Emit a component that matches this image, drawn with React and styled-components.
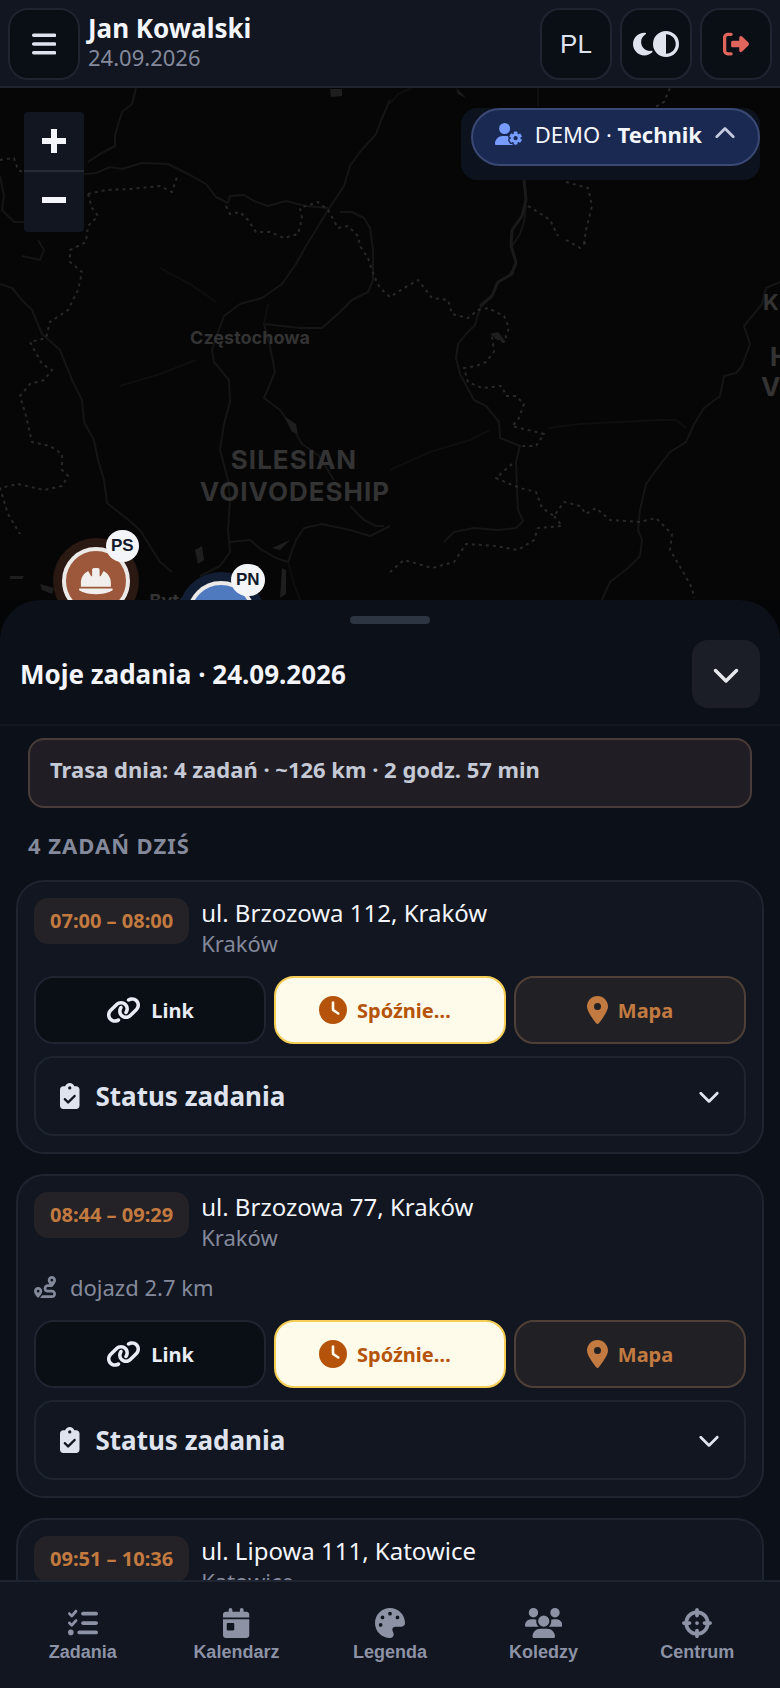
import React from "react";
import styled, { createGlobalStyle } from "styled-components";
import {
  FaBars,
  FaMoon,
  FaCircleHalfStroke,
  FaRightFromBracket,
  FaUserGear,
  FaChevronUp,
  FaChevronDown,
  FaLink,
  FaClock,
  FaLocationDot,
  FaClipboardCheck,
  FaRoute,
  FaListCheck,
  FaCalendarDay,
  FaPalette,
  FaUsers,
  FaCrosshairs,
  FaHelmetSafety,
} from "react-icons/fa6";

const color = {
  bg: "#0c1018",
  deep: "#0a0e15",
  surface: "#111621",
  line: "#1e2530",
  text: "#f3f5fb",
  soft: "#dfe3ee",
  muted: "#848a9b",
  copper: "#c27a40",
};

const GlobalStyle = createGlobalStyle`
  *, *::before, *::after { box-sizing: border-box; }
  body {
    margin: 0;
    background: #040506;
    color: ${color.text};
    font-family: "Noto Sans", sans-serif;
  }
  button { font-family: inherit; margin: 0; padding: 0; border: 0; color: inherit; cursor: pointer; }
  svg { display: block; flex: none; }
`;

// Icons whose artboard is not square keep the width of that artboard.
const fitted = (Icon, units) => styled(Icon)`
  width: calc(1em * ${units} / 512);
  height: 1em;
`;

const BarsIcon = fitted(FaBars, 448);
const MoonIcon = fitted(FaMoon, 384);
const UserGearIcon = fitted(FaUserGear, 640);
const LinkIcon = fitted(FaLink, 640);
const PinIcon = fitted(FaLocationDot, 384);
const ClipboardIcon = fitted(FaClipboardCheck, 384);
const CalendarIcon = fitted(FaCalendarDay, 448);
const UsersIcon = fitted(FaUsers, 640);
const HelmetIcon = fitted(FaHelmetSafety, 576);

const Screen = styled.div`
  display: flex;
  flex-direction: column;
  height: 100vh;
  overflow: hidden;
`;

const TopBar = styled.header`
  display: flex;
  flex: none;
  gap: 8px;
  padding: 8px 8px 6px;
  background: ${color.surface};
  border-bottom: 2px solid ${color.line};
`;

const BarButton = styled.button`
  display: flex;
  align-items: center;
  justify-content: center;
  width: 72px;
  height: 72px;
  border: 2px solid ${color.line};
  border-radius: 20px;
  background: ${color.deep};
  color: ${(p) => (p.$danger ? "#e0655c" : color.soft)};
  font-family: "Liberation Sans", sans-serif;
  font-size: ${(p) => p.$size || 28}px;
`;

const Identity = styled.div`
  flex: 1;
  padding-top: 5px;
`;

const UserName = styled.div`
  font-size: 26px;
  line-height: 30px;
  font-weight: 700;
`;

const UserDate = styled.div`
  font-size: 22px;
  line-height: 28px;
  color: ${color.muted};
`;

const MapArea = styled.section`
  position: relative;
  flex: none;
  height: 512px;
  overflow: hidden;
  background: #060606;
`;

const MapDrawing = styled.svg`
  width: 100%;
  height: 100%;
`;

const ZoomControl = styled.div`
  position: absolute;
  top: 24px;
  left: 24px;
  display: flex;
  flex-direction: column;
  width: 60px;
  border-radius: 4px;
  overflow: hidden;
  background: ${color.surface};
`;

const ZoomButton = styled.button`
  display: flex;
  align-items: center;
  justify-content: center;
  height: 60px;
  background: transparent;
  color: ${color.text};

  &:first-child { border-bottom: 2px solid #252b37; }
`;

const RolePanel = styled.div`
  position: absolute;
  top: 20px;
  right: 20px;
  padding: 0 0 14px 10px;
  border-radius: 16px;
  background: #0c121e;
`;

const RolePill = styled.button`
  display: flex;
  align-items: center;
  gap: 12px;
  height: 58px;
  padding: 0 22px 6px;
  border: 2px solid #3a4974;
  border-radius: 29px;
  background: #1a2952;
  color: ${color.text};
  font-size: 22px;

  svg:first-child { color: #769cff; }
  svg:last-child { color: #c4cbe0; }
`;

const Marker = styled.div`
  position: absolute;
  display: flex;
  align-items: center;
  justify-content: center;
  width: 86px;
  height: 86px;
  border-radius: 50%;
  background: ${(p) => p.$halo};
`;

const MarkerDisc = styled.div`
  display: flex;
  align-items: center;
  justify-content: center;
  width: 68px;
  height: 68px;
  border: 4px solid #eceae9;
  border-radius: 50%;
  background: ${(p) => p.$fill};
  color: #f1efee;
  font-size: 30px;
`;

const MarkerBadge = styled.span`
  position: absolute;
  top: -8px;
  left: 53px;
  padding: 0 5px;
  border-radius: 17px;
  background: #f4f5f8;
  color: #131a2b;
  font-family: "Liberation Sans", sans-serif;
  font-size: 17px;
  line-height: 32px;
  font-weight: 700;
`;

const Sheet = styled.main`
  display: flex;
  flex-direction: column;
  flex: 1;
  min-height: 0;
  border-radius: 40px 40px 0 0;
  background: ${color.bg};
`;

const Grip = styled.div`
  width: 80px;
  height: 8px;
  margin: 16px auto;
  border-radius: 4px;
  background: #2d3542;
`;

const SheetHead = styled.div`
  display: flex;
  align-items: center;
  justify-content: space-between;
  padding: 0 20px 16px;
  border-bottom: 2px solid #121720;
`;

const SheetTitle = styled.h1`
  margin: 0;
  font-size: 26px;
  line-height: 36px;
  font-weight: 700;
`;

const CollapseButton = styled.button`
  display: flex;
  align-items: center;
  justify-content: center;
  width: 68px;
  height: 68px;
  border-radius: 16px;
  background: #1b1e26;
  color: #e6e8ee;
  font-size: 28px;
`;

const SheetBody = styled.div`
  flex: 1;
  min-height: 0;
  padding: 12px 16px 0;
  overflow: hidden;
`;

const RouteSummary = styled.p`
  margin: 0 12px;
  padding: 12px 20px 20px;
  border: 2px solid #493c39;
  border-radius: 16px;
  background: #201e24;
  color: #c5c9d5;
  font-size: 22px;
  line-height: 34px;
  font-weight: 700;
`;

const SectionLabel = styled.h2`
  margin: 22px 12px 20px;
  color: ${color.muted};
  font-size: 22px;
  line-height: 30px;
  font-weight: 700;
  letter-spacing: 1px;
`;

const TaskList = styled.div`
  display: flex;
  flex-direction: column;
  gap: 20px;
`;

const Card = styled.article`
  padding: 16px;
  border: 2px solid ${color.line};
  border-radius: 28px;
  background: ${color.surface};
`;

const CardHead = styled.div`
  display: flex;
  align-items: flex-start;
  gap: 12px;
`;

const TimeChip = styled.span`
  padding: 0 16px;
  border-radius: 14px;
  background: #242226;
  color: ${color.copper};
  font-size: 20px;
  line-height: 46px;
  font-weight: 700;
`;

const Address = styled.div`
  font-size: 24px;
  line-height: 30px;
`;

const City = styled.div`
  color: ${color.muted};
  font-size: 22px;
  line-height: 30px;
`;

const Drive = styled.div`
  display: flex;
  align-items: center;
  gap: 14px;
  margin-top: 20px;
  color: ${color.muted};
  font-size: 22px;
  line-height: 30px;
`;

const Actions = styled.div`
  display: grid;
  grid-template-columns: repeat(3, 1fr);
  gap: 8px;
  margin: 18px 0 12px;
`;

const actionTone = {
  plain: { bg: color.deep, line: color.line, ink: "#e9ecf4" },
  late: { bg: "#fffbeb", line: "#f5cd55", ink: "#b45309" },
  map: { bg: "#212024", line: "#4f4037", ink: color.copper },
};

const ActionButton = styled.button`
  display: flex;
  align-items: center;
  justify-content: center;
  gap: 10px;
  height: 68px;
  border: 2px solid ${(p) => actionTone[p.$tone].line};
  border-radius: 20px;
  background: ${(p) => actionTone[p.$tone].bg};
  color: ${(p) => actionTone[p.$tone].ink};
  font-size: 20px;
  font-weight: 700;

  svg { font-size: 28px; }
`;

const ActionLabel = styled.span`
  min-width: ${(p) => p.$min || 0}px;
  text-align: left;
`;

const StatusButton = styled.button`
  display: flex;
  align-items: center;
  gap: 16px;
  width: 100%;
  height: 80px;
  padding: 0 24px;
  border: 2px solid ${color.line};
  border-radius: 20px;
  background: transparent;
  color: ${color.soft};
  font-size: 26px;
  font-weight: 700;

  svg:last-child { margin-left: auto; font-size: 22px; }
`;

const BottomNav = styled.nav`
  display: grid;
  grid-template-columns: repeat(5, 1fr);
  flex: none;
  padding: 0 6px;
  border-top: 2px solid ${color.line};
  background: ${color.surface};
`;

const NavButton = styled.button`
  display: flex;
  flex-direction: column;
  align-items: center;
  gap: 4px;
  padding: 26px 0;
  background: transparent;
  color: #8d92a5;
  font-family: "Liberation Sans", sans-serif;
  font-size: 18px;
  line-height: 20px;
  font-weight: 700;

  svg { font-size: 30px; }
`;

const rivers = [
  "M136 88 L132 104 L122 112 L115 135 L115 146 L100 154 L88 162",
  "M84 174 L96 173 L110 167 L122 169 L142 163 L168 164 L190 175 L206 184 L216 197 L228 203",
  "M228 203 L230 196 L244 195 L254 201 L268 206 L286 201 L306 206 L328 208",
  "M390 100 L382 118 L376 134 L360 152 L350 166 L344 186 L328 210 L316 230 L306 246 L296 264 L282 284 L262 298 L240 304 L224 316 L218 332 L212 350 L214 362 L229 380 L230 402 L224 424 L220 450 L228 480 L230 500 L228 530 L230 552 L220 566 L200 576",
  "M340 212 L352 212 L364 218 L370 228 L373 250 L373 280 L368 292 L352 300 L340 312 L322 328 L300 328 L264 324 L270 346 L275 372 L264 398 L280 410 L294 430 L302 444 L318 455 L334 480",
  "M0 284 L12 288 L22 300 L32 310 L42 334 L60 350 L72 380 L82 400 L84 422 L94 440 L98 460 L104 480 L107 503 L126 518 L140 530 L160 562 L172 572",
  "M526 205 L524 222 L520 234 L512 246 L516 266 L508 276 L496 284 L492 296 L480 308 L475 325 L466 334 L458 344 L456 358 L460 374 L474 400 L486 406 L499 422 L500 438 L520 446 L516 462 L517 490 L518 510 L523 521 L516 528 L498 530 L474 528 L454 532 L444 542",
  "M780 282 L766 288 L762 304 L744 326 L750 344 L742 366 L736 373 L724 376 L720 396 L704 408 L694 424 L686 442 L670 452 L656 470 L646 484 L640 510 L638 530 L642 540 L640 556 L628 568 L610 582 L602 600",
  "M0 176 L4 196 L2 210 L14 222 L26 222",
  "M38 240 L44 250 L40 260 L22 256",
  "M230 542 L250 540 L262 550 L276 558 L288 562 L296 540 L304 528 L322 524 L350 530 L370 536 L390 526",
  "M350 506 L364 520 L376 526 L384 526",
];

const faintRoads = [
  "M390 104 L398 94 L412 88",
  "M538 88 L538 106",
  "M390 470 L430 452 L470 440 L490 430",
  "M548 428 L580 424 L620 422 L660 420 L676 420 L686 428",
  "M120 386 L160 374 L196 360",
  "M160 268 L190 284 L216 302",
  "M268 304 L264 324",
  "M288 562 L294 584 L300 600",
];

const borders = [
  "M88 194 L106 190 L130 189 L160 186 L172 192 L178 174",
  "M226 206 L230 214 L240 212 L248 220 L256 232 L270 232 L284 238 L298 234 L302 218 L300 208 L318 202 L328 210 L338 228 L348 226 L358 236 L360 246 L368 258 L374 276 L380 288 L390 297 L404 288 L418 280 L432 298 L448 300 L452 314 L468 318 L478 310 L488 308 L504 316 L509 328 L504 342 L492 336 L494 352 L486 362 L476 366 L464 368 L468 382 L482 388 L502 386 L506 396 L516 396 L524 404 L518 420 L512 426 L528 430 L544 434 L536 446 L518 446",
  "M0 160 L14 158 L18 170 L28 174",
  "M88 194 L92 208 L98 216 L88 226 L86 242 L70 250 L70 262 L82 272 L78 290 L68 310 L50 322 L46 338 L30 342 L42 364 L52 370 L44 380 L30 384 L20 396 L26 416 L32 442 L50 446 L62 454 L62 470 L68 476 L62 486 L44 490 L18 484 L0 488 L8 514 L20 534",
  "M512 464 L496 478 L510 484 L520 488 L536 492 L542 508 L554 516 L564 502 L580 506 L586 514 L596 508 L610 520 L640 522 L656 518 L672 534 L670 550 L682 570 L692 588 L694 598",
  "M554 516 L562 526 L538 528 L534 540 L518 550 L496 546 L466 544 L454 562 L432 568 L404 560 L390 572",
  "M528 206 L538 212 L550 220 L558 236",
  "M566 182 L588 188 L592 206 L586 230 L584 244",
  "M566 240 L580 248 L588 240",
  "M650 110 L664 102 L670 88",
];

const lakes = [
  "M330 89 L342 89 L342 96 L331 97 Z",
  "M284 416 L296 424 L298 434 L292 432 Z",
  "M195 550 L202 546 L204 560 L198 564 Z",
  "M282 568 L286 570 L286 594 L280 598 Z",
  "M272 548 L290 540 L280 550 Z",
  "M456 88 L466 98 L458 94 Z",
  "M490 334 L498 332 L506 342 L498 340 Z",
  "M10 576 L24 576 L22 579 L10 579 Z",
  "M40 584 L54 588 L52 594 L42 590 Z",
];

function RegionMap() {
  return (
    <MapDrawing
      viewBox="0 88 780 512"
      preserveAspectRatio="xMidYMid slice"
      aria-hidden="true"
    >
      <g fill="none" stroke="#151516" strokeWidth="2" strokeLinejoin="round">
        {rivers.map((d) => (
          <path key={d} d={d} />
        ))}
      </g>
      <g fill="none" stroke="#0e0e0f" strokeWidth="2">
        {faintRoads.map((d) => (
          <path key={d} d={d} />
        ))}
      </g>
      <path
        d="M524 180 L526 200 L522 216 L512 230 L511 246 L516 262 L512 274 L498 282 L492 296 L480 306"
        fill="none"
        stroke="#1a1a1b"
        strokeWidth="3"
        strokeLinejoin="round"
      />
      <g
        fill="none"
        stroke="#29292a"
        strokeWidth="2"
        strokeDasharray="3 4"
        strokeLinejoin="round"
      >
        {borders.map((d) => (
          <path key={d} d={d} />
        ))}
      </g>
      <g fill="#1e1e1f">
        {lakes.map((d) => (
          <path key={d} d={d} />
        ))}
      </g>
      <g
        fill="#333334"
        fontFamily="Inter, sans-serif"
        fontWeight="700"
        textAnchor="middle"
      >
        <text x="250" y="344" fontSize="18">Częstochowa</text>
        <text x="294" y="469" fontSize="26" letterSpacing="1">SILESIAN</text>
        <text x="295" y="501" fontSize="26" letterSpacing="1">VOIVODESHIP</text>
        <text x="178" y="607" fontSize="18">Bytom</text>
        <g textAnchor="start">
          <text x="763" y="310" fontSize="22">Kielce</text>
          <text x="770" y="366" fontSize="26">HOLY</text>
          <text x="761" y="396" fontSize="26">VOIVODESHIP</text>
        </g>
      </g>
    </MapDrawing>
  );
}

const tasks = [
  { time: "07:00 – 08:00", address: "ul. Brzozowa 112, Kraków", city: "Kraków" },
  {
    time: "08:44 – 09:29",
    address: "ul. Brzozowa 77, Kraków",
    city: "Kraków",
    drive: "dojazd 2.7 km",
  },
  {
    time: "09:51 – 10:36",
    address: "ul. Lipowa 111, Katowice",
    city: "Katowice",
  },
];

function TaskCard({ task }) {
  return (
    <Card>
      <CardHead>
        <TimeChip>{task.time}</TimeChip>
        <div>
          <Address>{task.address}</Address>
          <City>{task.city}</City>
        </div>
      </CardHead>
      {task.drive && (
        <Drive>
          <FaRoute />
          <span>{task.drive}</span>
        </Drive>
      )}
      <Actions>
        <ActionButton type="button" $tone="plain">
          <LinkIcon />
          <ActionLabel>Link</ActionLabel>
        </ActionButton>
        <ActionButton type="button" $tone="late">
          <FaClock />
          <ActionLabel $min={104}>Spóźnie…</ActionLabel>
        </ActionButton>
        <ActionButton type="button" $tone="map">
          <PinIcon />
          <ActionLabel>Mapa</ActionLabel>
        </ActionButton>
      </Actions>
      <StatusButton type="button" aria-expanded="false">
        <ClipboardIcon />
        <span>Status zadania</span>
        <FaChevronDown />
      </StatusButton>
    </Card>
  );
}

const navItems = [
  { label: "Zadania", Icon: FaListCheck },
  { label: "Kalendarz", Icon: CalendarIcon },
  { label: "Legenda", Icon: FaPalette },
  { label: "Koledzy", Icon: UsersIcon },
  { label: "Centrum", Icon: FaCrosshairs },
];

export default function App() {
  return (
    <Screen>
      <GlobalStyle />
      <TopBar>
        <BarButton type="button" aria-label="Menu">
          <BarsIcon />
        </BarButton>
        <Identity>
          <UserName>Jan Kowalski</UserName>
          <UserDate>24.09.2026</UserDate>
        </Identity>
        <BarButton type="button" $size={26}>PL</BarButton>
        <BarButton type="button" $size={26} aria-label="Motyw">
          <MoonIcon />
          <FaCircleHalfStroke />
        </BarButton>
        <BarButton type="button" $size={26} $danger aria-label="Wyloguj">
          <FaRightFromBracket />
        </BarButton>
      </TopBar>

      <MapArea aria-label="Mapa">
        <RegionMap />
        <Marker $halo="#2a1812" style={{ left: 53, top: 450 }}>
          <MarkerDisc $fill="#9d583b">
            <HelmetIcon />
          </MarkerDisc>
          <MarkerBadge>PS</MarkerBadge>
        </Marker>
        <Marker $halo="#121e33" style={{ left: 178, top: 484 }}>
          <MarkerDisc $fill="#4f7abf">
            <HelmetIcon />
          </MarkerDisc>
          <MarkerBadge>PN</MarkerBadge>
        </Marker>
        <ZoomControl>
          <ZoomButton type="button" aria-label="Przybliż">
            <svg width="24" height="24" viewBox="0 0 24 24" fill="currentColor">
              <path d="M9 0h6v9h9v6h-9v9H9v-9H0V9h9z" />
            </svg>
          </ZoomButton>
          <ZoomButton type="button" aria-label="Oddal">
            <svg width="24" height="24" viewBox="0 0 24 24" fill="currentColor">
              <path d="M0 7h24v6H0z" />
            </svg>
          </ZoomButton>
        </ZoomControl>
        <RolePanel>
          <RolePill type="button" aria-expanded="true">
            <UserGearIcon />
            <span>
              DEMO · <strong>Technik</strong>
            </span>
            <FaChevronUp />
          </RolePill>
        </RolePanel>
      </MapArea>

      <Sheet>
        <Grip />
        <SheetHead>
          <SheetTitle>Moje zadania · 24.09.2026</SheetTitle>
          <CollapseButton type="button" aria-label="Zwiń">
            <FaChevronDown />
          </CollapseButton>
        </SheetHead>
        <SheetBody>
          <RouteSummary>Trasa dnia: 4 zadań · ~126 km · 2 godz. 57 min</RouteSummary>
          <SectionLabel>4 ZADAŃ DZIŚ</SectionLabel>
          <TaskList>
            {tasks.map((task) => (
              <TaskCard key={task.time} task={task} />
            ))}
          </TaskList>
        </SheetBody>
      </Sheet>

      <BottomNav>
        {navItems.map(({ label, Icon }) => (
          <NavButton key={label} type="button">
            <Icon />
            <span>{label}</span>
          </NavButton>
        ))}
      </BottomNav>
    </Screen>
  );
}
